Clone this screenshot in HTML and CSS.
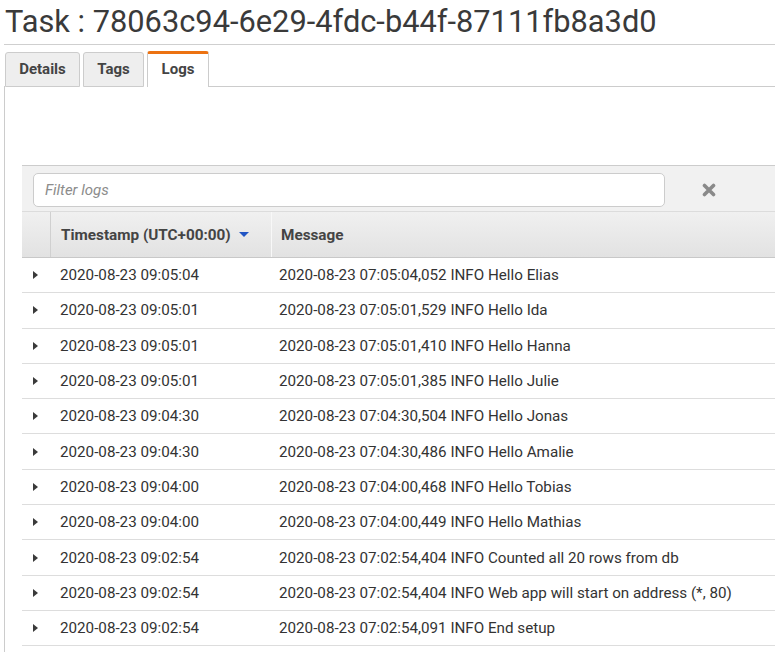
FILE: index.html
```html
<!DOCTYPE html>
<html>
<head>
<meta charset="utf-8">
<link rel="stylesheet" href="styles.css">
</head>
<body>
<div class="page">
  <h1 class="title">Task : 78063c94-6e29-4fdc-b44f-87111fb8a3d0</h1>
  <div class="tabs">
    <div class="tab">Details</div>
    <div class="tab">Tags</div>
    <div class="tab active">Logs</div>
    <div class="tab-fill"></div>
  </div>
  <div class="content">
    <div class="panel">
      <div class="filter-bar">
        <input class="filter" type="text" placeholder="Filter logs">
        <div class="clear">
          <svg width="14" height="14" viewBox="0 0 14 14"><path d="M2.5 2.5 L11.5 11.5 M11.5 2.5 L2.5 11.5" stroke="#8a8a8a" stroke-width="3.6" stroke-linecap="round"/></svg>
        </div>
      </div>
      <div class="row head">
        <div class="cell c0"></div>
        <div class="cell c1">Timestamp (UTC+00:00) <span class="sort"></span></div>
        <div class="cell c2">Message</div>
      </div>
      <div class="row"><div class="cell c0"><span class="caret"></span></div><div class="cell c1">2020-08-23 09:05:04</div><div class="cell c2">2020-08-23 07:05:04,052 INFO Hello Elias</div></div>
      <div class="row"><div class="cell c0"><span class="caret"></span></div><div class="cell c1">2020-08-23 09:05:01</div><div class="cell c2">2020-08-23 07:05:01,529 INFO Hello Ida</div></div>
      <div class="row"><div class="cell c0"><span class="caret"></span></div><div class="cell c1">2020-08-23 09:05:01</div><div class="cell c2">2020-08-23 07:05:01,410 INFO Hello Hanna</div></div>
      <div class="row"><div class="cell c0"><span class="caret"></span></div><div class="cell c1">2020-08-23 09:05:01</div><div class="cell c2">2020-08-23 07:05:01,385 INFO Hello Julie</div></div>
      <div class="row"><div class="cell c0"><span class="caret"></span></div><div class="cell c1">2020-08-23 09:04:30</div><div class="cell c2">2020-08-23 07:04:30,504 INFO Hello Jonas</div></div>
      <div class="row"><div class="cell c0"><span class="caret"></span></div><div class="cell c1">2020-08-23 09:04:30</div><div class="cell c2">2020-08-23 07:04:30,486 INFO Hello Amalie</div></div>
      <div class="row"><div class="cell c0"><span class="caret"></span></div><div class="cell c1">2020-08-23 09:04:00</div><div class="cell c2">2020-08-23 07:04:00,468 INFO Hello Tobias</div></div>
      <div class="row"><div class="cell c0"><span class="caret"></span></div><div class="cell c1">2020-08-23 09:04:00</div><div class="cell c2">2020-08-23 07:04:00,449 INFO Hello Mathias</div></div>
      <div class="row"><div class="cell c0"><span class="caret"></span></div><div class="cell c1">2020-08-23 09:02:54</div><div class="cell c2">2020-08-23 07:02:54,404 INFO Counted all 20 rows from db</div></div>
      <div class="row"><div class="cell c0"><span class="caret"></span></div><div class="cell c1">2020-08-23 09:02:54</div><div class="cell c2">2020-08-23 07:02:54,404 INFO Web app will start on address (*, 80)</div></div>
      <div class="row"><div class="cell c0"><span class="caret"></span></div><div class="cell c1">2020-08-23 09:02:54</div><div class="cell c2">2020-08-23 07:02:54,091 INFO End setup</div></div>
    </div>
  </div>
</div>
</body>
</html>
```

FILE: styles.css
```css
html, body {
  margin: 0;
  padding: 0;
  overflow: hidden;
  background: #fff;
}
body {
  font-family: Roboto, "Liberation Sans", sans-serif;
  color: #333;
  font-size: 15.2px;
}
.page {
  padding-left: 4px;
  height: 652px;
  display: flex;
  flex-direction: column;
}
.title {
  margin: 0;
  padding: 0 0 0 1px;
  height: 44px;
  line-height: 44px;
  font-size: 30.8px;
  font-weight: 400;
  color: #3a3a3a;
  border-bottom: 1px solid #cfcfcf;
  white-space: nowrap;
}
.tabs {
  display: flex;
  align-items: flex-end;
  margin-top: 6px;
  height: 36px;
}
.tab {
  box-sizing: border-box;
  height: 35px;
  padding: 0;
  margin-right: 3px;
  background: #eeeeee;
  border: 1px solid #cccccc;
  border-radius: 3px 3px 0 0;
  font-weight: 700;
  color: #444;
  font-size: 15px;
  line-height: 33px;
  text-align: center;
}
.tab:nth-child(1) { width: 75px; margin-left: 1px; }
.tab:nth-child(2) { width: 61px; }
.tab.active {
  width: 62px;
  height: 36px;
  background: #fff;
  border-top: 3px solid #ec7211;
  border-bottom: none;
  line-height: 31px;
  margin-right: 0;
}
.tab-fill {
  flex: 1;
  border-bottom: 1px solid #cccccc;
  height: 35px;
  box-sizing: border-box;
}
.content {
  flex: 1;
  border-left: 1px solid #cccccc;
  margin-top: -1px;
  padding-top: 79px;
  padding-left: 17px;
}
.panel {
  border-top: 1px solid #cccccc;
}
.filter-bar {
  background: #f1f1f1;
  height: 46px;
  display: flex;
  align-items: flex-start;
  padding-top: 7px;
  box-sizing: border-box;
  border-bottom: 1px solid #dcdcdc;
}
.filter {
  box-sizing: border-box;
  margin-left: 11px;
  width: 632px;
  height: 34px;
  border: 1px solid #cccccc;
  border-radius: 5px;
  background: #fff;
  padding: 0 11px;
  font-family: Roboto, "Liberation Sans", sans-serif;
  font-size: 15px;
  outline: none;
}
.filter::placeholder {
  color: #8c8c8c;
  font-style: italic;
}
.clear {
  margin-left: 37px;
  width: 14px;
  height: 14px;
  margin-top: 10px;
}
.row {
  display: grid;
  grid-template-columns: 28px 221px 1fr;
  height: 35.3px;
  box-sizing: border-box;
  border-bottom: 1px solid #dddddd;
  align-items: center;
  white-space: nowrap;
}
.cell { padding-left: 10px; }
.c0 { padding-left: 0; display: flex; justify-content: center; align-items: center; height: 100%; }
.c2 { padding-left: 8px; }
.row.head {
  height: 46px;
  background: linear-gradient(#f0f0f0, #e2e2e2);
  border-bottom: 1px solid #c8c8c8;
  font-weight: 700;
  font-size: 15.3px;
  color: #444;
  align-items: stretch;
}
.row.head .cell {
  display: flex;
  align-items: center;
  padding-top: 1px;
}
.row.head .c1 { border-left: 1px solid #d0d0d0; padding-left: 10px; }
.row.head .c2 { border-left: 1px solid #f8f8f8; padding-left: 9px; }
.sort {
  display: inline-block;
  width: 0;
  height: 0;
  margin-left: 8px;
  border-left: 5px solid transparent;
  border-right: 5px solid transparent;
  border-top: 5px solid #2155c4;
  position: relative;
  top: -1px;
}
.caret {
  display: inline-block;
  width: 0;
  height: 0;
  border-top: 4px solid transparent;
  border-bottom: 4px solid transparent;
  border-left: 5px solid #3a3a3a;
  margin-left: -2px;
}
```
